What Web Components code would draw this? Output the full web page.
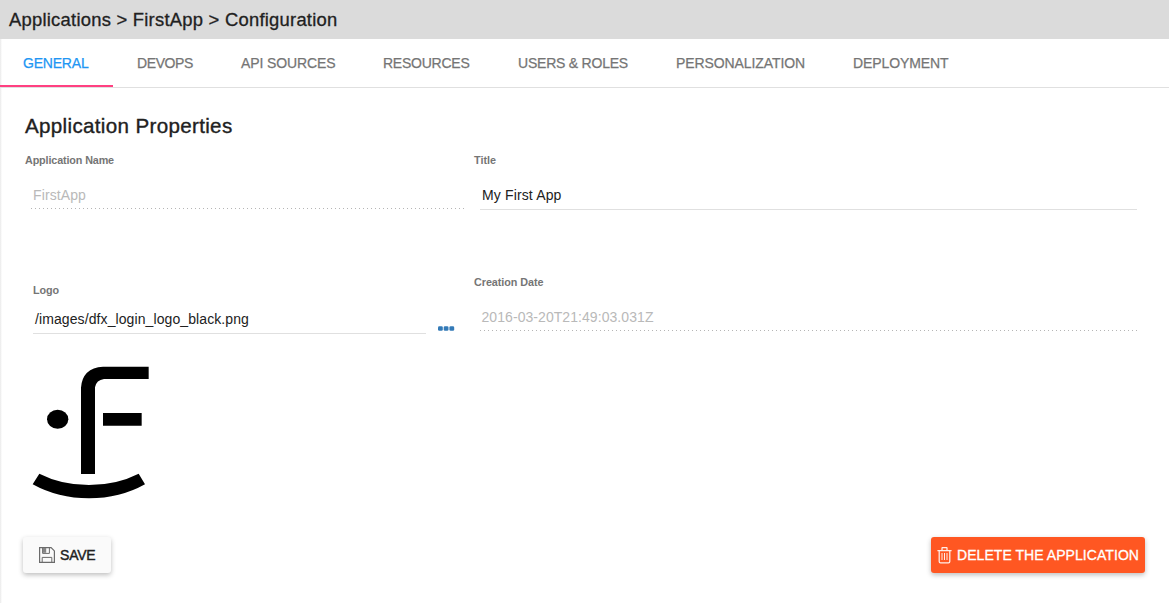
<!DOCTYPE html>
<html lang="en"><head><meta charset="utf-8"><title>Application configuration</title>
<style>html,body{margin:0;height:100%;overflow:hidden;background:#fff;font-family:"Liberation Sans",Arial,sans-serif}</style></head>
<body><app-configuration></app-configuration>
<script>
const define=(name,html,init)=>{
  const t=document.createElement('template');t.innerHTML=html;
  customElements.define(name,class extends HTMLElement{
    connectedCallback(){
      if(this.shadowRoot)return;
      this.attachShadow({mode:'open'}).append(t.content.cloneNode(true));
      if(init)init(this,this.shadowRoot);
    }
  });
};
// Text tracked to a given advance width; the stroke stands in for a medium weight.
define('fit-text',`<style>:host{display:block;white-space:nowrap;line-height:20px}span{display:inline-block}</style><span><slot></slot></span>`,(h,r)=>{
  const s=r.querySelector('span'),w=+h.getAttribute('w');
  s.style.letterSpacing=((w-s.getBoundingClientRect().width)/h.textContent.length)+'px';
  if(h.hasAttribute('m'))h.style.webkitTextStroke=h.getAttribute('m')+'px currentColor';
});
define('title-bar',`<style>:host{display:flex;align-items:center;height:39px;box-sizing:border-box;padding:1px 0 0 9px;background:#dbdbdb;color:#212121;font-size:18.4px}</style><slot></slot>`);
define('tab-item',`<style>:host{display:block;box-sizing:border-box;height:48px;padding:14px 0 0 24px;color:#757575;font-size:14px}
:host([active]){color:#2196f3;border-bottom:2px solid #ff4081;padding-left:23px}</style><slot></slot>`,h=>{h.style.width=h.getAttribute('width')+'px'});
define('tab-bar',`<style>:host{display:flex;height:48px;border-bottom:1px solid #e0e0e0}</style><slot></slot>`);
define('form-field',`<style>:host{display:block;color:#212121;font-size:14px}
.label{font-size:10.8px;font-weight:bold;color:#757575;height:20px}
.value{box-sizing:border-box;border-bottom:1px solid #e0e0e0;margin:var(--gap,15px) 0 0 var(--inset,6px);padding-left:var(--pad,2px);height:25px}
:host([disabled]) .value{color:#b9b9b9;border:0;height:24px;background:linear-gradient(90deg,#b5b5b5 1px,transparent 1px) var(--dot,0px) 100%/4px 1px repeat-x}</style>
<div class="label"><slot name="label"></slot></div><div class="value"><slot></slot></div>`);
define('more-dots',`<style>:host{display:block;height:5px}svg{display:block}</style><svg width="17" height="5" fill="#337ab7"><rect y=".2" width="4.8" height="4.6" rx="1.3"/><rect x="5.7" y=".2" width="4.8" height="4.6" rx="1.3"/><rect x="11.4" y=".2" width="4.8" height="4.6" rx="1.3"/></svg>`);
define('app-logo',`<style>:host{display:block;width:150px;height:150px}svg{display:block}</style>
<svg width="150" height="150" viewBox="0 0 450 450"><path d="M183 357V98Q187 39 249 35H386V72H252Q229 75 225 97V357ZM249 174H365V212H249ZM58 356Q125 390 207 390Q289 390 356 356L375 388Q300 430 207 430Q114 430 38 388Z"/><ellipse cx="113" cy="193" rx="32" ry="28.5"/></svg>`);
define('save-icon',`<style>:host{display:block}svg{display:block}</style><svg width="16" height="16" fill="none" stroke="#6b6b6b"><path d="M.6.6H12.1L15.4 3.9V15.4H.6Z" stroke-width="1.2"/><path d="M3.6.6V6.4H10.4V.6M3.2 15.2V10.4H12.8V15.2"/><path d="M4 1H7.2V5.8H4Z" fill="#858585" stroke="none"/></svg>`);
define('trash-icon',`<style>:host{display:block}svg{display:block}</style><svg width="15" height="17" fill="none" stroke="#fff" stroke-opacity=".9"><path d="M.4 3.5H14.6M5 3.2V1.2Q5 .6 5.6.6H9.4Q10 .6 10 1.2V3.2M2.2 3.8V14.5Q2.2 15.8 3.5 15.8H11.5Q12.8 15.8 12.8 14.5V3.8" stroke-width="1.25"/><path d="M5 6V13M7.5 6V13M10 6V13"/></svg>`);
define('raised-button',`<style>:host{display:flex;align-items:center;box-sizing:border-box;height:36px;border-radius:3px;background:#fafafa;color:#212121;font-size:14px;gap:5px;padding-left:16px;width:88px;box-shadow:0 2px 5px rgba(0,0,0,.26)}
:host([warn]){background:#ff5722;color:#fff;width:214px;padding-left:6px}</style><slot></slot>`);
define('app-configuration',`<style>
:host{display:block;height:603px;overflow:hidden;background:linear-gradient(90deg,#e9e9e9,#fff 2px)}
main{padding:28px 24px 0 25px}
.head{font-size:20.6px;color:#212121;height:34px}
.row{display:grid;grid-template-columns:449px 663px;height:122px}
.row.second{height:78px}
.logo-row{display:grid;grid-template-columns:393px 17px;column-gap:12px;padding:8px 0 0 8px;--inset:0px;--pad:2px;--gap:9px}
.logo-row more-dots{margin-top:46px}
app-logo{margin:5px 0 0 -5px}
footer{display:flex;justify-content:space-between;margin:32px 0 0 -2px}
.name{width:440px;--inset:5px;--pad:3px;--dot:1px}
.date{--pad:1.5px}
</style>
<title-bar><fit-text w="328.5" m=".3">Applications &gt; FirstApp &gt; Configuration</fit-text></title-bar>
<tab-bar>
<tab-item active width="113"><fit-text w="65.5" m=".25">GENERAL</fit-text></tab-item>
<tab-item width="104"><fit-text w="56" m=".25">DEVOPS</fit-text></tab-item>
<tab-item width="142"><fit-text w="94.5" m=".25">API SOURCES</fit-text></tab-item>
<tab-item width="135"><fit-text w="86.5" m=".25">RESOURCES</fit-text></tab-item>
<tab-item width="158"><fit-text w="110" m=".25">USERS &amp; ROLES</fit-text></tab-item>
<tab-item width="177"><fit-text w="129" m=".25">PERSONALIZATION</fit-text></tab-item>
<tab-item width="144"><fit-text w="95.5" m=".25">DEPLOYMENT</fit-text></tab-item>
</tab-bar>
<main>
<div class="head"><fit-text w="207.5" m=".35">Application Properties</fit-text></div>
<div class="row">
<form-field class="name" disabled><fit-text slot="label" w="89">Application Name</fit-text><fit-text w="53">FirstApp</fit-text></form-field>
<form-field><fit-text slot="label" w="22">Title</fit-text><fit-text w="79.5">My First App</fit-text></form-field>
</div>
<div class="row second">
<div class="logo-row"><form-field><fit-text slot="label" w="26">Logo</fit-text><fit-text w="214">/images/dfx_login_logo_black.png</fit-text></form-field><more-dots></more-dots></div>
<form-field class="date" disabled><fit-text slot="label" w="69.5">Creation Date</fit-text><fit-text w="172">2016-03-20T21:49:03.031Z</fit-text></form-field>
</div>
<app-logo></app-logo>
<footer><raised-button><save-icon></save-icon><fit-text w="35.5" m=".4">SAVE</fit-text></raised-button>
<raised-button warn><trash-icon></trash-icon><fit-text w="182" m=".3">DELETE THE APPLICATION</fit-text></raised-button></footer>
</main>`);
</script></body></html>
